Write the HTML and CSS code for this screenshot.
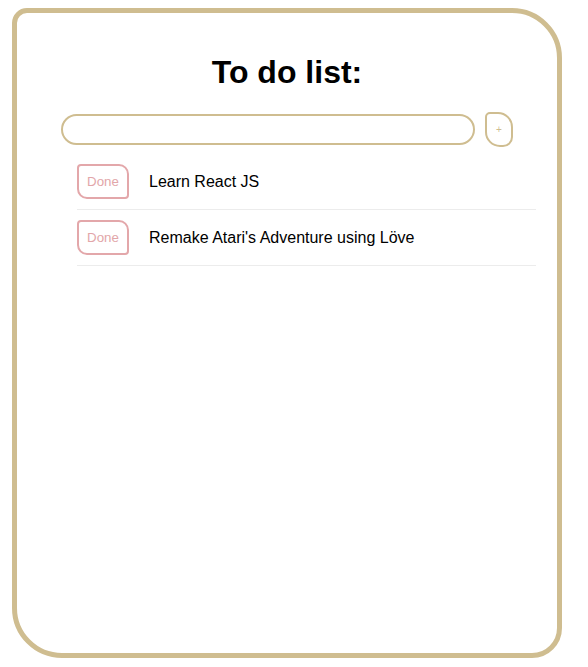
FILE: index.html
```html
<!DOCTYPE html>
<html lang="en">
<head>
<meta charset="utf-8">
<title>To do list</title>
<link rel="stylesheet" href="styles.css">
</head>
<body>
<main class="card">
  <h1 class="title">To do list:</h1>
  <form class="add">
    <input class="add-input" type="text" aria-label="New task">
    <button class="add-btn" type="button">+</button>
  </form>
  <ul class="list">
    <li class="item"><button class="done" type="button">Done</button><span class="label">Learn React JS</span></li>
    <li class="item"><button class="done" type="button">Done</button><span class="label">Remake Atari's Adventure using Löve</span></li>
  </ul>
</main>
</body>
</html>
```

FILE: styles.css
```css
html, body {
  margin: 0;
  padding: 0;
  background: #ffffff;
}

body {
  font-family: "Liberation Sans", Arial, sans-serif;
  color: #000;
}

.card {
  box-sizing: border-box;
  width: 550px;
  height: 650px;
  margin: 8px 0 0 12px;
  padding-top: 41px;
  border: 5px solid #cfbd90;
  border-radius: 15px 50px 30px 50px;
  background: #fff;
}

.title {
  margin: 0;
  font-size: 32px;
  line-height: 37px;
  font-weight: bold;
  text-align: center;
}

.add {
  display: flex;
  justify-content: center;
  align-items: center;
  gap: 10px;
  margin: 21px 0 0 0;
}

.add-input {
  box-sizing: border-box;
  width: 414px;
  height: 31px;
  margin: 0;
  padding: 0 12px;
  border: 2px solid #cfbd90;
  border-radius: 16px;
  background: #fff;
  outline: none;
  font-family: inherit;
  font-size: 14px;
}

.add-btn {
  box-sizing: border-box;
  width: 28px;
  height: 35px;
  margin: 0;
  padding: 0;
  border: 2px solid #cfbd90;
  border-radius: 5px 15px 10px 15px;
  background: #fff;
  color: #cfbd90;
  font-family: inherit;
  font-size: 10px;
  line-height: 1;
}

.list {
  list-style: none;
  margin: 7px 0 0 0;
  padding: 0 21px 0 60px;
}

.item {
  display: flex;
  align-items: center;
  gap: 20px;
  height: 56px;
  box-sizing: border-box;
  border-bottom: 1px solid #ececec;
}

.done {
  box-sizing: border-box;
  width: 52px;
  height: 35px;
  margin: 0;
  padding: 0;
  border: 2px solid #e3a7aa;
  border-radius: 4px 10px 4px 10px;
  background: #fff;
  color: #e2a6a9;
  font-family: inherit;
  font-size: 13.333px;
}

.label {
  font-size: 16px;
}
```
